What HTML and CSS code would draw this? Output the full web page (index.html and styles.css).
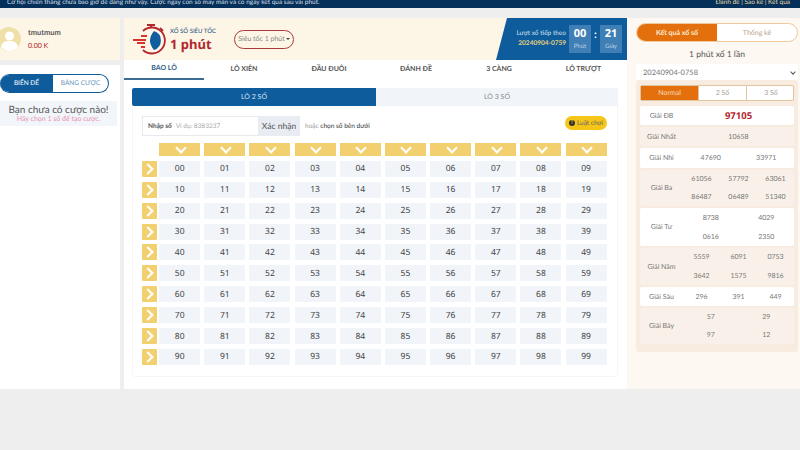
FILE: index.html
```html
<!DOCTYPE html>
<html>
<head>
    <meta charset="utf-8">
    <title>Xổ số siêu tốc 1 phút</title>
    <link rel="stylesheet" href="styles.css">
</head>
<body>
    <div class="topbar">
        <span>Cơ hội chiến thắng chưa bao giờ dễ dàng như vậy. Cược ngay con số may mắn và có ngày kết quả sau vài phút.</span>
        <span class="topbar-links">Đánh đề | Sao kê | Kết quả</span>
    </div>
    <div class="page">
        <div class="left">
            <div class="user">
                <svg class="avatar" viewBox="0 0 21 24">
                    <circle cx="9" cy="12" r="12" fill="#efe0a8"/>
                    <circle cx="9.500" cy="9" r="4.500" fill="#fff"/>
                    <path d="M1 20c1-5 4-6 8.500-6s7.500 1 8.500 6c-2 2-5 4-8.500 4s-6.500-2-8.500-4z" fill="#fff"/>
                </svg>
                <div>
                    <div class="user-name">tmutmum</div>
                    <div class="user-money">0.00 K</div>
                </div>
            </div>
            <div class="left-body">
                <div class="switch">
                    <div class="switch-on">BIẾN ĐỂ</div>
                    <div class="switch-off">BẢNG CƯỢC</div>
                </div>
                <div class="empty">
                    <div class="empty-title">Bạn chưa có cược nào!</div>
                    <div class="empty-sub">Hãy chọn 1 số để tạo cược.</div>
                </div>
            </div>
        </div>

        <div class="center">
            <div class="game-head">
                <svg class="logo" viewBox="0 0 34 34">
                    <path d="M14 3h8M18 3v3M27 6l3 3" stroke="#b3272d" stroke-width="1.800" fill="none"/>
                    <path d="M10 9a13 13 0 1 1 0 19" stroke="#b3272d" stroke-width="1.800" fill="none"/>
                    <path d="M21 9a10 10 0 0 1 0 19q-8-9.500 0-19z" fill="#115e9f"/>
                    <path d="M8 14h6M0 18h13M4 21h8M8 25h4" stroke="#d8342c" stroke-width="1.800" fill="none"/>
                </svg>
                <div class="game-title">
                    <div class="game-kicker">XỔ SỐ SIÊU TỐC</div>
                    <div class="game-name">1 phút</div>
                </div>
                <div class="speed">Siêu tốc 1 phút<span class="caret"></span></div>
                <div class="countdown">
                    <div class="next">
                        <div>Lượt xổ tiếp theo</div>
                        <div class="next-id">20240904-0759</div>
                    </div>
                    <div class="time-box"><b>00</b><span>Phút</span></div>
                    <div class="colon">:</div>
                    <div class="time-box"><b>21</b><span>Giây</span></div>
                </div>
            </div>
            <div class="tabs">
                <div class="tab active">BAO LÔ</div>
                <div class="tab">LÔ XIÊN</div>
                <div class="tab">ĐẦU ĐUÔI</div>
                <div class="tab">ĐÁNH ĐỀ</div>
                <div class="tab">3 CÀNG</div>
                <div class="tab">LÔ TRƯỢT</div>
            </div>
            <div class="board">
                <div class="subtabs">
                    <div class="subtab active">LÔ 2 SỐ</div>
                    <div class="subtab">LÔ 3 SỐ</div>
                </div>
                <div class="inner">
                    <div class="entry">
                        <div class="entry-input"><b>Nhập số</b><span>Ví dụ: 8383237</span></div>
                        <div class="entry-btn">Xác nhận</div>
                        <div class="entry-note">hoặc <b>chọn số bên dưới</b></div>
                        <div class="rules"><i>?</i>Luật chơi</div>
                    </div>
                    <div class="numbers">
                        <div></div>
                        <div class="col-head"></div><div class="col-head"></div><div class="col-head"></div><div class="col-head"></div><div class="col-head"></div><div class="col-head"></div><div class="col-head"></div><div class="col-head"></div><div class="col-head"></div><div class="col-head"></div>

                        <div class="row-head"></div><div class="num">00</div><div class="num">01</div><div class="num">02</div><div class="num">03</div><div class="num">04</div><div class="num">05</div><div class="num">06</div><div class="num">07</div><div class="num">08</div><div class="num">09</div>
                        <div class="row-head"></div><div class="num">10</div><div class="num">11</div><div class="num">12</div><div class="num">13</div><div class="num">14</div><div class="num">15</div><div class="num">16</div><div class="num">17</div><div class="num">18</div><div class="num">19</div>
                        <div class="row-head"></div><div class="num">20</div><div class="num">21</div><div class="num">22</div><div class="num">23</div><div class="num">24</div><div class="num">25</div><div class="num">26</div><div class="num">27</div><div class="num">28</div><div class="num">29</div>
                        <div class="row-head"></div><div class="num">30</div><div class="num">31</div><div class="num">32</div><div class="num">33</div><div class="num">34</div><div class="num">35</div><div class="num">36</div><div class="num">37</div><div class="num">38</div><div class="num">39</div>
                        <div class="row-head"></div><div class="num">40</div><div class="num">41</div><div class="num">42</div><div class="num">43</div><div class="num">44</div><div class="num">45</div><div class="num">46</div><div class="num">47</div><div class="num">48</div><div class="num">49</div>
                        <div class="row-head"></div><div class="num">50</div><div class="num">51</div><div class="num">52</div><div class="num">53</div><div class="num">54</div><div class="num">55</div><div class="num">56</div><div class="num">57</div><div class="num">58</div><div class="num">59</div>
                        <div class="row-head"></div><div class="num">60</div><div class="num">61</div><div class="num">62</div><div class="num">63</div><div class="num">64</div><div class="num">65</div><div class="num">66</div><div class="num">67</div><div class="num">68</div><div class="num">69</div>
                        <div class="row-head"></div><div class="num">70</div><div class="num">71</div><div class="num">72</div><div class="num">73</div><div class="num">74</div><div class="num">75</div><div class="num">76</div><div class="num">77</div><div class="num">78</div><div class="num">79</div>
                        <div class="row-head"></div><div class="num">80</div><div class="num">81</div><div class="num">82</div><div class="num">83</div><div class="num">84</div><div class="num">85</div><div class="num">86</div><div class="num">87</div><div class="num">88</div><div class="num">89</div>
                        <div class="row-head"></div><div class="num">90</div><div class="num">91</div><div class="num">92</div><div class="num">93</div><div class="num">94</div><div class="num">95</div><div class="num">96</div><div class="num">97</div><div class="num">98</div><div class="num">99</div>
                    </div>
                </div>
            </div>
        </div>

        <div class="right">
            <div class="result-tabs">
                <div class="result-tab active">Kết quả xổ số</div>
                <div class="result-tab">Thống kê</div>
            </div>
            <div class="result-title">1 phút xổ 1 lần</div>
            <div class="round">20240904-0758<span class="chevron"></span></div>
            <div class="results">
                <div class="modes">
                    <div class="mode active">Normal</div>
                    <div class="mode">2 Số</div>
                    <div class="mode">3 Số</div>
                </div>
                <div class="prize h19 white"><div class="prize-name">Giải ĐB</div><div class="prize-vals c1"><div class="special">97105</div></div></div>
                <div class="prize h19"><div class="prize-name">Giải Nhất</div><div class="prize-vals c1"><div>10658</div></div></div>
                <div class="prize h20 white"><div class="prize-name">Giải Nhì</div><div class="prize-vals c2"><div>47690</div><div>33971</div></div></div>
                <div class="prize h36"><div class="prize-name">Giải Ba</div><div class="prize-vals c3"><div>61056</div><div>57792</div><div>63061</div><div>86487</div><div>06489</div><div>51340</div></div></div>
                <div class="prize h38 white"><div class="prize-name">Giải Tư</div><div class="prize-vals c2"><div>8738</div><div>4029</div><div>0616</div><div>2350</div></div></div>
                <div class="prize h37"><div class="prize-name">Giải Năm</div><div class="prize-vals c3"><div>5559</div><div>6091</div><div>0753</div><div>3642</div><div>1575</div><div>9816</div></div></div>
                <div class="prize h19 white"><div class="prize-name">Giải Sáu</div><div class="prize-vals c3"><div>296</div><div>391</div><div>449</div></div></div>
                <div class="prize h36"><div class="prize-name">Giải Bảy</div><div class="prize-vals c2"><div>57</div><div>29</div><div>97</div><div>12</div></div></div>
            </div>
        </div>
    </div>
</body>
</html>
```

FILE: styles.css
```css
* { box-sizing: border-box; }
html, body { height: 100%; }
body { margin: 0; background: #eeeeee; color: #333; font-family: Lato, "Liberation Sans", sans-serif; font-size: 8px; overflow: hidden; text-rendering: geometricPrecision; }

.topbar { height: 8px; background: #04305a; color: #d9dfe6; display: flex; justify-content: space-between; padding: 0 10px 0 7px; font-size: 6.500px; line-height: 6px; white-space: nowrap; }
.topbar-links { color: #e9d9a0; }

.page { display: grid; grid-template-columns: 120px 507px 173px; margin-top: 10px; height: 371px; }

/* left */
.left { display: flex; flex-direction: column; gap: 5px; }
.user { height: 42px; background: #fdf6e6; display: flex; align-items: center; gap: 7px; }
.avatar { width: 21px; height: 24px; flex: none; }
.user-name { font-weight: 700; font-size: 7.500px; color: #555; margin-bottom: 5px; }
.user-money { font-size: 7px; color: #b3272d; }
.left-body { flex: 1; background: #fff; padding-top: 9px; }
.switch { display: flex; width: 109px; height: 19px; border: 1px solid #0e5c9c; border-left: 0; border-radius: 10px; overflow: hidden; margin-bottom: 8px; }
.switch-on { width: 53px; background: #0e5c9c; color: #fff; display: flex; align-items: center; justify-content: center; font-size: 6.500px; }
.switch-off { flex: 1; color: #6d94bb; display: flex; align-items: center; justify-content: center; font-size: 6.500px; }
.empty { width: 117px; height: 25px; background: #f2f5fa; text-align: center; padding-top: 4px; }
.empty-title { font-size: 10px; line-height: 11px; color: #555; }
.empty-sub { font-size: 7px; line-height: 7px; color: #e894b4; }

/* center */
.center { background: #fff; display: flex; flex-direction: column; margin-left: 4px; }
.game-head { height: 42px; background: #fdf6e6; display: flex; align-items: center; padding-left: 9px; }
.logo { width: 34px; height: 34px; flex: none; margin-right: 3px; }
.game-title { width: 64px; }
.game-kicker { font-size: 6px; color: #1b4f7c; line-height: 9px; }
.game-name { font-family: "Noto Sans", sans-serif; font-weight: 700; font-size: 13px; line-height: 16px; color: #b3272d; }
.speed { width: 60px; height: 19px; border: 1px solid #a83a3a; border-radius: 10px; display: flex; align-items: center; justify-content: center; color: #888; font-size: 7px; white-space: nowrap; }
.caret { display: inline-block; border: 2px solid transparent; border-top-color: #444; border-bottom: 0; margin-left: 1px; }
.countdown { margin-left: auto; width: 131px; height: 42px; background: #0e5c9c; clip-path: polygon(11px 0, 100% 0, 100% 100%, 0 100%); display: flex; align-items: center; justify-content: flex-end; padding-right: 5px; color: #cfe0ef; }
.next { text-align: right; font-size: 6.500px; line-height: 10px; margin-right: 3px; }
.next-id { color: #e9d27a; font-weight: 700; }
.time-box { width: 22px; height: 28px; background: #3f7fb5; display: flex; flex-direction: column; align-items: center; color: #fff; }
.time-box b { font-family: "Noto Sans", sans-serif; font-size: 11px; line-height: 18px; }
.time-box span { font-size: 6px; line-height: 8px; color: #bcd4e8; }
.colon { width: 9px; text-align: center; color: #fff; font-weight: 700; font-size: 11px; line-height: 12px; margin-bottom: 8px; }

.tabs { display: grid; grid-template-columns: 80px 80px 90px 84px 82px 87px; height: 20px; }
.tab { display: flex; align-items: center; justify-content: center; font-size: 7px; font-weight: 700; color: #555; padding-bottom: 2px; }
.tab.active { color: #2c5d86; border-bottom: 2px solid #3a6d96; }

.board { padding: 8px 9px 0 8px; flex: 1; }
.subtabs { display: grid; grid-template-columns: 244px 242px; height: 18px; }
.subtab { display: flex; align-items: center; justify-content: center; background: #f1f5fa; color: #888; font-size: 7px; }
.subtab.active { background: #0e5c9c; color: #d8e6f2; border-radius: 2px 0 0 2px; }

.inner { height: 271px; border: 1px solid #f6f6f6; border-top: 0; border-radius: 0 0 4px 4px; padding: 10px 0 0 9px; }
.entry { display: flex; align-items: center; height: 20px; padding-right: 10px; }
.entry-input { width: 116px; height: 20px; border: 1px solid #e6e9ee; border-right: 0; display: flex; align-items: center; padding-left: 5px; gap: 4px; color: #aaa; font-size: 6.500px; }
.entry-input b { font-weight: 700; color: #555; }
.entry-btn { width: 42px; height: 20px; background: #e9edf3; color: #555; font-size: 8.500px; display: flex; align-items: center; justify-content: center; margin-right: 5px; }
.entry-note { color: #999; font-size: 6.500px; }
.entry-note b { font-weight: 400; color: #333; }
.rules { margin-left: auto; width: 42px; height: 14px; align-self: flex-start; background: #f5c518; border-radius: 7px; display: flex; align-items: center; justify-content: center; gap: 2px; color: #666; font-size: 6.500px; }
.rules i { width: 6px; height: 6px; border-radius: 50%; background: #333; color: #f5c518; font-style: normal; font-size: 5px; line-height: 6px; text-align: center; font-weight: 700; }

.numbers { display: grid; grid-template-columns: 13px repeat(10, 41px); column-gap: 4.170px; row-gap: 4.900px; grid-template-rows: 13px repeat(10, 16px); margin-top: 7px; }
.col-head, .row-head { background: #f3d06f; position: relative; }
.row-head { width: 15px; border-radius: 1px; }
.col-head::after { content: ""; position: absolute; left: 50%; top: 1px; width: 6px; height: 6px; margin-left: -3px; border: solid #fff; border-width: 0 2px 2px 0; transform: rotate(45deg); }
.row-head::after { content: ""; position: absolute; left: 2px; top: 4px; width: 6px; height: 6px; border: solid #fff; border-width: 2px 2px 0 0; transform: rotate(45deg); }
.num { background: #f1f5fa; border-radius: 1px; display: flex; align-items: center; justify-content: center; font-family: "Noto Sans", sans-serif; font-size: 8.500px; color: #444; }

/* right */
.right { background: #fef8f2; padding: 5px 2px 0 9px; }
.result-tabs { display: flex; height: 19px; border: 1px solid #f0c99c; border-radius: 10px; overflow: hidden; background: #fff; }
.result-tab { flex: 1; display: flex; align-items: center; justify-content: center; color: #b9a58c; font-size: 7px; }
.result-tab.active { background: #e4700d; color: #fdebd3; font-weight: 700; }
.result-title { text-align: center; font-size: 8.500px; line-height: 11px; margin-top: 7px; color: #555; }
.round { height: 16px; margin-top: 4px; background: #fff; display: flex; align-items: center; justify-content: space-between; padding: 0 3px 0 7px; color: #777; font-size: 7.500px; }
.chevron { width: 4px; height: 4px; border: solid #555; border-width: 0 1px 1px 0; transform: rotate(45deg); }
.results { background: #f8ece1; height: 272px; border-radius: 3px; padding: 5px 4px 0; }
.modes { display: grid; grid-template-columns: 57px 48px 49px; height: 16px; margin-bottom: 5px; border: 1px solid #e0c5a3; border-radius: 2px; background: #fff; }
.mode { display: flex; align-items: center; justify-content: center; color: #a8a29a; font-size: 7px; border-left: 1px solid #e0c5a3; }
.mode.active { background: #e4700d; color: #fbdcbc; border-left: 0; }
.prize { display: flex; margin-bottom: 2px; border-radius: 2px; background: #f9f1e9; color: #777; font-size: 7px; }
.prize.white { background: #fff; }
.h19 { height: 19px; }
.h20 { height: 20px; }
.h36 { height: 36px; }
.h37 { height: 37px; }
.h38 { height: 38px; }
.prize-name { width: 43px; flex: none; display: flex; align-items: center; justify-content: center; }
.prize-vals { flex: 1; display: grid; align-items: center; justify-items: center; }
.c1 { grid-template-columns: 1fr; }
.c2 { grid-template-columns: 1fr 1fr; }
.c3 { grid-template-columns: 1fr 1fr 1fr; }
.special { font-family: "Noto Sans", sans-serif; font-weight: 700; font-size: 9.500px; color: #b3272d; }
```
